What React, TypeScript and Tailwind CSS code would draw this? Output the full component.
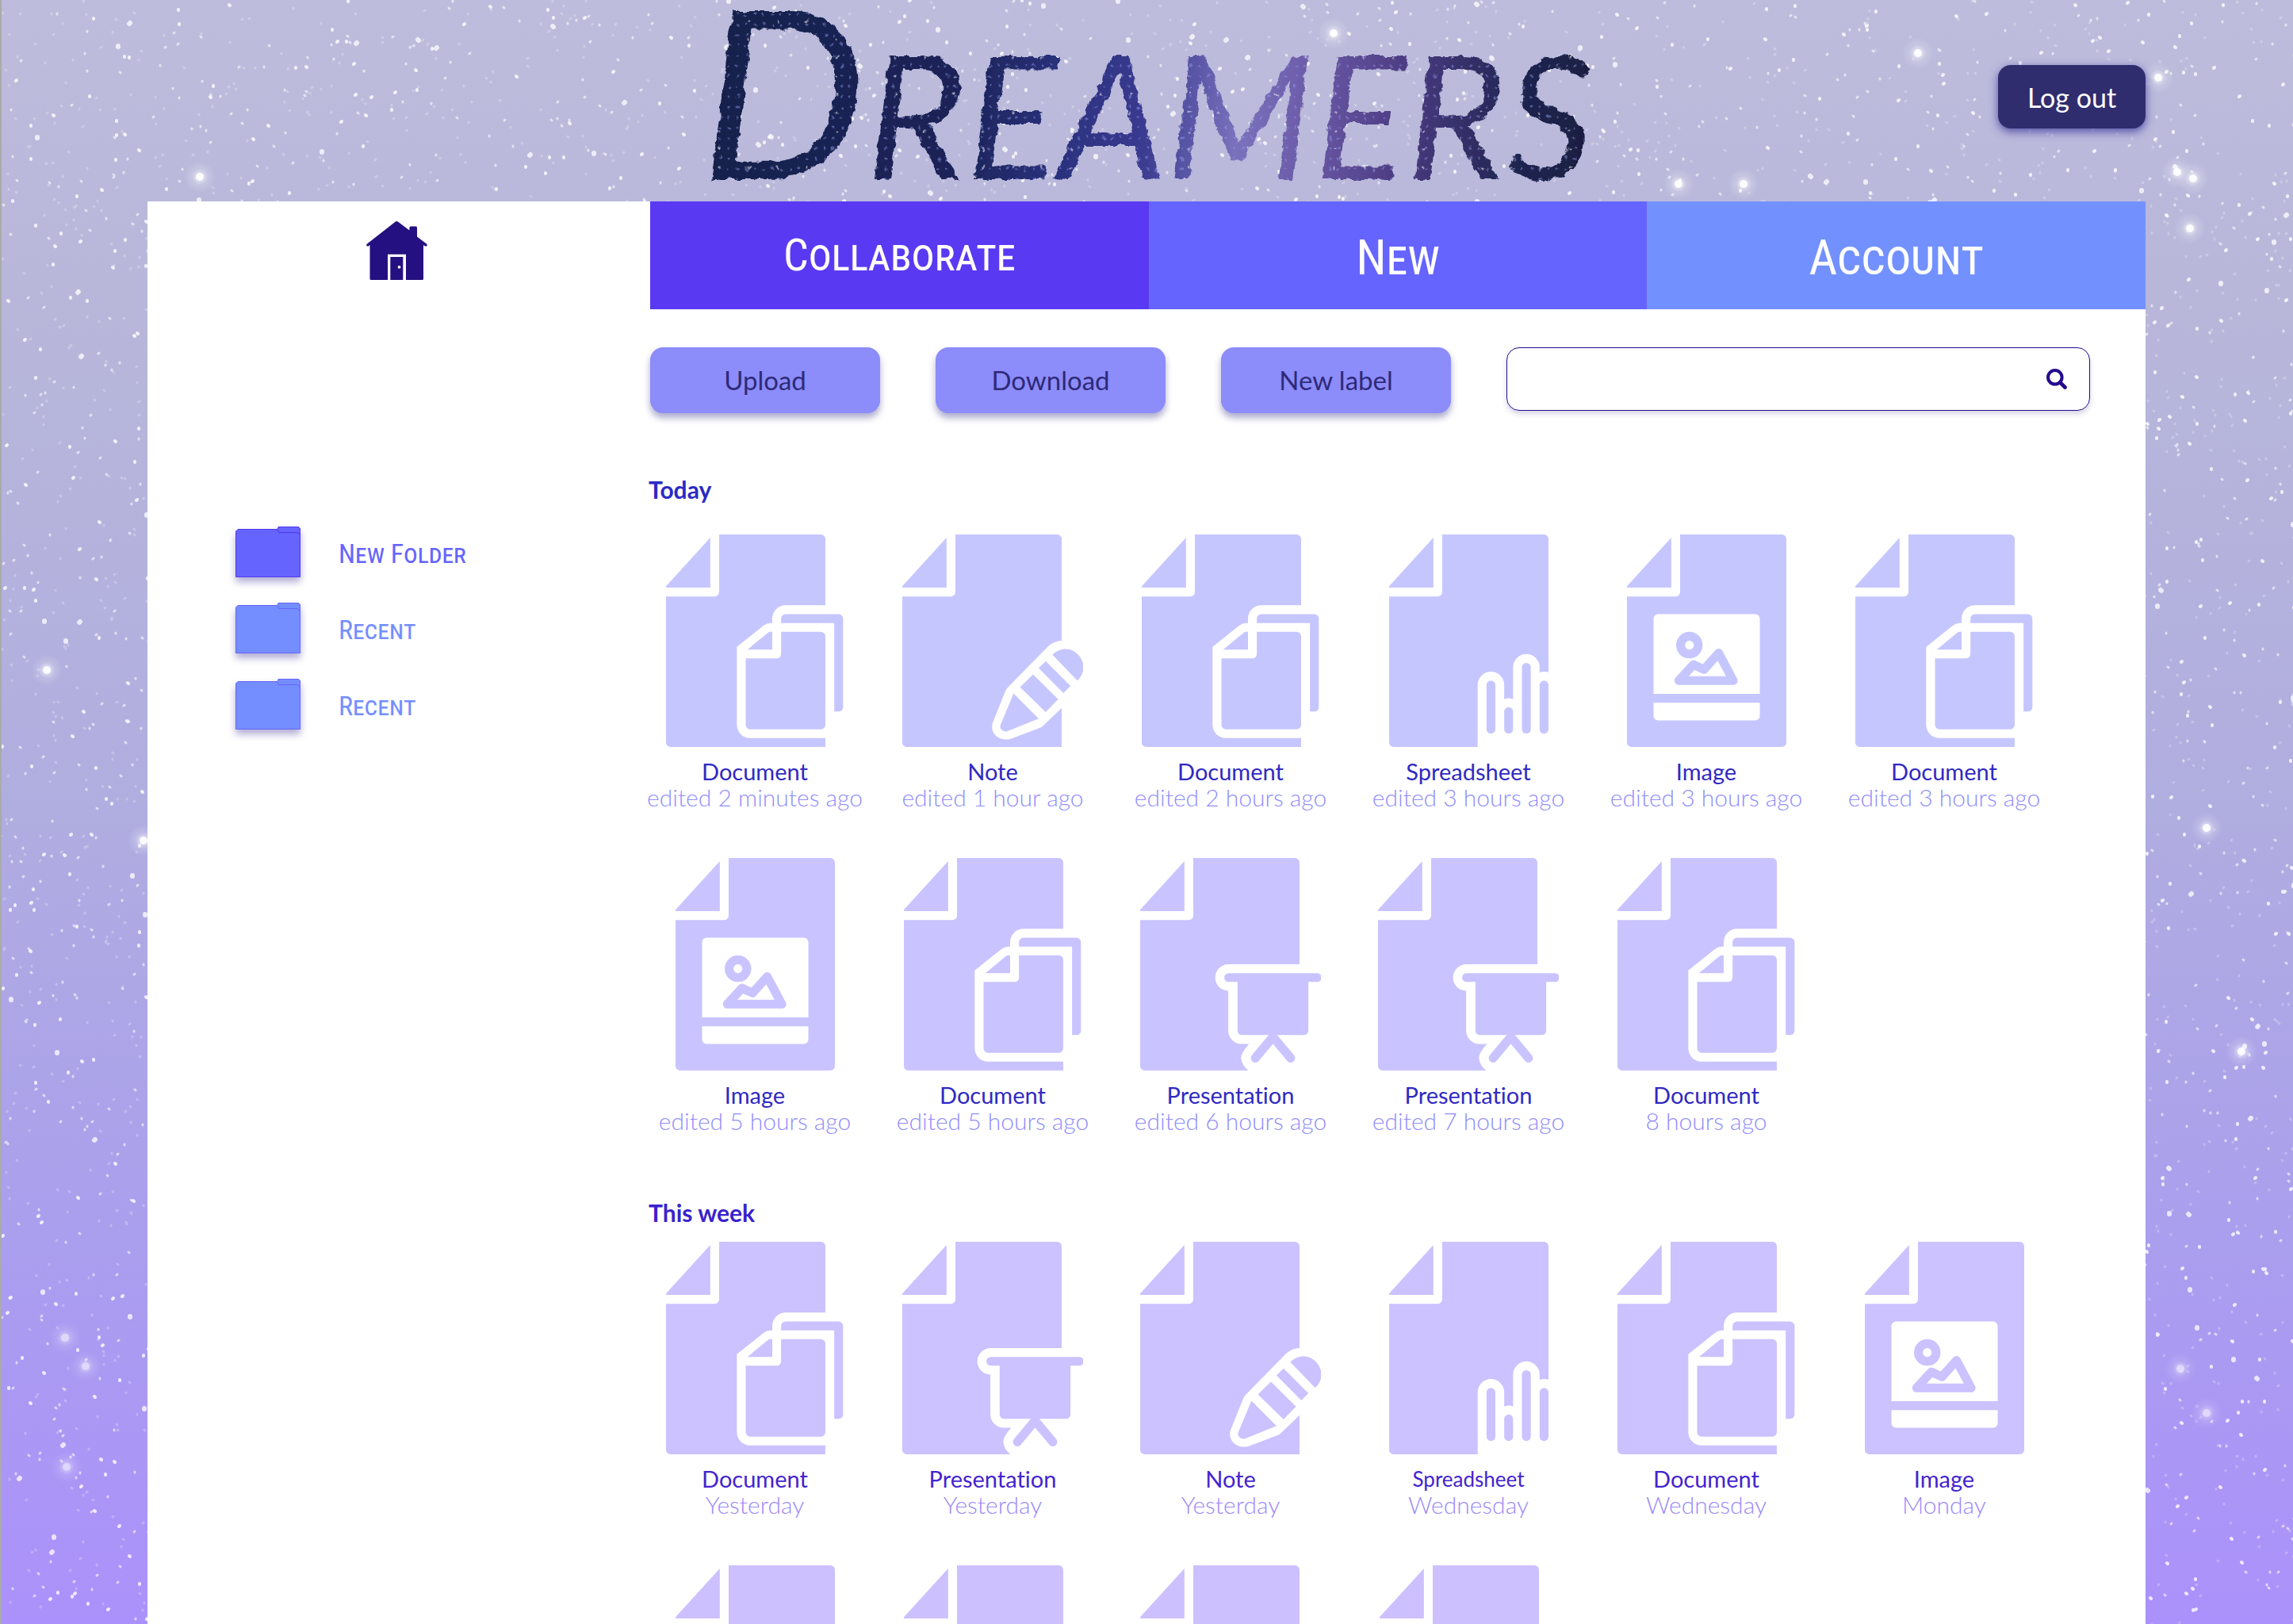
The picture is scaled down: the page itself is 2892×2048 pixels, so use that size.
import React from "react";

type Kind = "Document" | "Note" | "Spreadsheet" | "Image" | "Presentation";
type FileItem = { kind: Kind; when: string; small?: boolean };

const PAGE =
  "M6 0H17.5a.5.5 0 0 1 .5.5V24H.5a.5.5 0 0 1-.5-.5V7H5.5a.5.5 0 0 0 .5-.5Z";
const PAGE_ROUND =
  "M6 0H17.5a.5.5 0 0 1 .5.5V23.5a.5.5 0 0 1-.5.5H.5a.5.5 0 0 1-.5-.5V7H5.5a.5.5 0 0 0 .5-.5Z";

const today: FileItem[] = [
  { kind: "Document", when: "edited 2 minutes ago" },
  { kind: "Note", when: "edited 1 hour ago" },
  { kind: "Document", when: "edited 2 hours ago" },
  { kind: "Spreadsheet", when: "edited 3 hours ago" },
  { kind: "Image", when: "edited 3 hours ago" },
  { kind: "Document", when: "edited 3 hours ago" },
  { kind: "Image", when: "edited 5 hours ago" },
  { kind: "Document", when: "edited 5 hours ago" },
  { kind: "Presentation", when: "edited 6 hours ago" },
  { kind: "Presentation", when: "edited 7 hours ago" },
  { kind: "Document", when: "8 hours ago" },
];

const week: FileItem[] = [
  { kind: "Document", when: "Yesterday" },
  { kind: "Presentation", when: "Yesterday" },
  { kind: "Note", when: "Yesterday" },
  { kind: "Spreadsheet", when: "Wednesday", small: true },
  { kind: "Document", when: "Wednesday" },
  { kind: "Image", when: "Monday" },
  { kind: "Image", when: "Monday" },
  { kind: "Document", when: "Monday" },
  { kind: "Presentation", when: "Monday" },
  { kind: "Document", when: "Monday" },
];

/* Deterministic star field, grouped by brightness */
function makeStars(count: number, seed: number) {
  let s = seed;
  const rnd = () => {
    s = (s * 1664525 + 1013904223) % 4294967296;
    return s / 4294967296;
  };
  let d = "";
  for (let i = 0; i < count; i++) {
    const x = Math.round(rnd() * 2892);
    const y = Math.round(rnd() * 2048);
    const dx = Math.round(rnd() * 2 - 1);
    d += `M${x} ${y}l${dx} 1`;
  }
  return d;
}

const starLayers = [
  { d: makeStars(5200, 7), width: 3, opacity: 0.25 },
  { d: makeStars(3200, 91), width: 3, opacity: 0.6 },
  { d: makeStars(2000, 403), width: 4, opacity: 0.8 },
  { d: makeStars(360, 55), width: 6, opacity: 0.75 },
];

const glows = [
  [2417, 67], [2720, 98], [2744, 217], [2764, 225], [2760, 288],
  [1680, 42], [250, 223], [57, 845], [179, 1060], [80, 1687], [106, 1723],
  [82, 1850], [2781, 1044], [2825, 1326], [2748, 1726],
  [2781, 1782], [2115, 232], [2197, 232],
];

function Sky() {
  return (
    <svg className="absolute inset-0 h-full w-full" aria-hidden="true">
      <defs>
        <radialGradient id="glow">
          <stop offset="0" stopColor="#fff" stopOpacity="0.9" />
          <stop offset="0.25" stopColor="#fff" stopOpacity="0.5" />
          <stop offset="0.5" stopColor="#fff" stopOpacity="0.18" />
          <stop offset="1" stopColor="#fff" stopOpacity="0" />
        </radialGradient>
        <filter id="brush" x="-5%" y="-5%" width="110%" height="110%">
          <feTurbulence type="fractalNoise" baseFrequency="0.08" numOctaves="3" seed="4" result="n" />
          <feDisplacementMap in="SourceGraphic" in2="n" scale="9" xChannelSelector="R" yChannelSelector="G" />
        </filter>
      </defs>
      {starLayers.map((l, i) => (
        <path key={i} d={l.d} stroke="#fff" strokeWidth={l.width} strokeLinecap="round" opacity={l.opacity} fill="none" />
      ))}
      {glows.map(([x, y], i) => (
        <g key={i} opacity={y > 1600 ? 0.65 : 1}>
          <circle cx={x} cy={y} r="20" fill="url(#glow)" />
          <circle cx={x} cy={y} r="5" fill="#fff" opacity="0.85" />
        </g>
      ))}
    </svg>
  );
}

function FileIcon({ kind, tone }: { kind: Kind; tone: string }) {
  const wide = kind === "Document" ? 20 : kind === "Note" || kind === "Presentation" ? 20.5 : 18;
  return (
    <svg viewBox={`0 0 ${wide} 24`} className={`h-[268px] w-auto ${tone}`} fill="currentColor" aria-hidden="true">
      <path d="M0 6V5.85L5 .35V6Z" />
      <path d={kind === "Image" ? PAGE_ROUND : PAGE} />
      {kind === "Document" && (
        <>
          <path fill="#fff" d="M12 10V9.5A1.5 1.5 0 0 1 13.5 8H20V23H9.5A1.5 1.5 0 0 1 8 21.5V12.7L11 10.3Q11.4 10 11.8 10Z" />
          <path d="M13 10V9.5A.5.5 0 0 1 13.5 9H19.5A.5.5 0 0 1 20 9.5V19.5A.5.5 0 0 1 19.5 20H19V10Z" />
          <path d="M13 11H17.5A.5.5 0 0 1 18 11.5V21.5A.5.5 0 0 1 17.5 22H9.5A.5.5 0 0 1 9 21.5V14H12.5A.5.5 0 0 0 13 13.5Z" />
          <path d="M9.2 13L11.5 11.1Q11.6 11 11.8 11H12V13Z" />
        </>
      )}
      {kind === "Note" && (
        <>
          <path fill="#fff" d="M18.1 11.97Q17.2 12 16.5 12.6L11.96 17.25Q11.7 17.5 11.6 17.8L10.2 21.3C9.9 22.4 10.8 23.4 12.2 23.1L15.4 21.9Q15.7 21.8 15.9 21.6L18.1 19.5Z" />
          <path d="M16.96 13.6C17.7 12.8 19 12.7 19.8 13.5C20.7 14.4 20.7 15.6 19.77 16.5Z" />
          <path d="M16.2 14.3L19 17.1L18.2 17.9L15.4 15.1Z" />
          <path d="M14.77 15.8L17.6 18.6L16.2 20.05L13.3 17.25Z" />
          <path d="M12.57 17.96L15.4 20.8L11.9 22.2C11.4 22.4 10.9 21.9 11.1 21.5Z" />
        </>
      )}
      {kind === "Spreadsheet" && (
        <>
          <path fill="#fff" d="M10 24.1V17A1.5 1.5 0 0 1 13 17V18.6Q13.5 18.4 14 18.6V15A1.5 1.5 0 0 1 17 15V15.6Q17.5 15.4 18.1 15.6V24.1Z" />
          <rect x="11" y="16.5" width="1" height="6" rx=".5" />
          <rect x="13" y="19.5" width="1" height="3" rx=".5" />
          <rect x="15" y="14.5" width="1" height="8" rx=".5" />
          <rect x="17" y="16.5" width="1" height="6" rx=".5" />
        </>
      )}
      {kind === "Image" && (
        <>
          <path fill="#fff" d="M3 18V9.5A.5.5 0 0 1 3.5 9H14.5A.5.5 0 0 1 15 9.5V18ZM3 19H15V20.5A.5.5 0 0 1 14.5 21H3.5A.5.5 0 0 1 3 20.5Z" />
          <circle cx="7.05" cy="12.5" r="1" fill="none" stroke="currentColor" />
          <path d="M5.85 16.5L7.5 14.7L8.7 15.25L10.35 13.4L12 16.5Z" fill="none" stroke="currentColor" strokeLinejoin="round" />
        </>
      )}
      {kind === "Presentation" && (
        <>
          <path fill="#fff" d="M18.1 12H10A1.5 1.5 0 0 0 9.95 15V19.5A1.5 1.5 0 0 0 11.5 21H12.3Q11.4 22 11.4 22.6Q11.5 23.6 12.4 24.1H18.1Z" />
          <rect x="9.5" y="13" width="11" height="1" rx=".5" />
          <path d="M11 13.6H19V19.5A.5.5 0 0 1 18.5 20H11.5A.5.5 0 0 1 11 19.5Z" />
          <path d="M13 22.6L15 20.2L17 22.6" fill="none" stroke="currentColor" strokeLinecap="round" strokeLinejoin="round" />
        </>
      )}
    </svg>
  );
}

function FileCard({ item, tone, title, sub }: { item: FileItem; tone: string; title: string; sub: string }) {
  return (
    <a href="#file" className="flex flex-col items-center">
      <FileIcon kind={item.kind} tone={tone} />
      <span className={`mt-[15px] leading-8 ${item.small ? "text-[26px]" : "text-[29px]"} ${title}`}>{item.kind}</span>
      <span className={`text-[30px] leading-8 font-light ${sub}`}>{item.when}</span>
    </a>
  );
}

function FileSection({ title, items, heading, tones, gap, label, sub }: {
  title: string; items: FileItem[]; heading: string; tones: string[]; gap: string; label: string; sub: string;
}) {
  return (
    <section>
      <h2 className={`ml-4 text-[30px] leading-8 font-bold ${heading}`}>{title}</h2>
      <div className={`grid grid-cols-[repeat(auto-fill,300px)] gap-y-[61px] ${gap}`}>
        {items.map((item, i) => (
          <FileCard key={i} item={item} tone={tones[i < 6 ? 0 : 1]} title={label} sub={sub} />
        ))}
      </div>
    </section>
  );
}

function Folder({ name, dark }: { name: string; dark?: boolean }) {
  const fill = dark ? "#6664ff" : "#748eff";
  const line = dark ? "#5238ec" : "#6664ff";
  return (
    <a href="#folder" className="flex h-16 items-center gap-12">
      <svg viewBox="0 0 82 64" className="h-16 w-[82px] overflow-visible drop-shadow-[0_6px_5px_rgba(60,50,150,0.4)]" fill={fill} stroke={line} aria-hidden="true">
        <path d="M54 .5H79.5L81.5 2.5V12H54Z" />
        <path d="M.5 63.5V6L3 3.5H52.5Q53.5 7.5 56 7.5H78L81.5 10.5V63.5Z" />
        <path d="M52.5 3.5Q54 .5 56 .5H79.5L81.5 2.5V10L78 7.5H56Q53.5 7.5 52.5 3.5Z" />
      </svg>
      <span className={`pt-1 font-['Roboto_Condensed','Liberation_Sans_Narrow','Liberation_Sans',sans-serif] text-[34px] whitespace-nowrap [font-variant:small-caps] ${dark ? "text-[#6664ff]" : "text-[#748eff]"}`}>
        {name}
      </span>
    </a>
  );
}

function HomeIcon() {
  return (
    <svg viewBox="0 0 77 74" className="h-[74px] w-[77px]" fill="#241080" aria-hidden="true">
      <path d="M36.8.6Q38.3-.5 39.8.6L54.4 11.6V8Q54.4 6.5 56 6.5H62.5Q64 6.5 64 8V19.5L76.3 28.8Q77.3 30.2 76.2 31.2Q75.2 32 73.8 31.2L72 30V72.5Q72 74 70.5 74H50V41.7H27V74H6Q4.5 74 4.5 72.5V30L3 31.2Q1.6 32 .6 31.2Q-.4 30 .7 28.8Z" />
      <path d="M30.3 45H46.3V74H30.3Z" />
      <circle cx="41.5" cy="57.8" r="1.9" fill="#fff" />
    </svg>
  );
}

const tabs = [
  { name: "Collaborate", cls: "bg-[#5a39f3] text-[56px]" },
  { name: "New", cls: "bg-[#6664ff] pt-1 text-[62px]" },
  { name: "Account", cls: "bg-[#7291ff] pt-1 text-[62px]" },
];

export default function App() {
  return (
    <div className="relative isolate flex h-screen flex-col overflow-hidden border-l-2 border-[#aaaaaa] bg-[linear-gradient(180deg,#bdbcdc_0%,#b7b6da_22%,#b0ade0_50%,#aaa0ec_73%,#ab91fb_100%)] pr-[186px] pl-[184px] font-['Lato',sans-serif] [font-variant-ligatures:none]">
      <Sky />
      <header className="relative grid h-[254px] shrink-0 grid-cols-[1fr_auto_1fr] items-start">
        <span />
        <h1 className="h-[254px] bg-[radial-gradient(circle_at_3px_4px,rgba(255,255,255,0.5)_1px,transparent_2px),radial-gradient(circle_at_8px_5px,rgba(150,160,240,0.45)_1px,transparent_2px),linear-gradient(95deg,#171f4a_0%,#1b2458_30%,#2c3380_42%,#3a3a90_50%,#7a72bc_60%,#6a58a6_68%,#4a3a80_78%,#1f2550_90%,#171c3c_100%)] bg-[length:37px_23px,11px_13px,100%_100%] bg-clip-text px-4 text-[216px] leading-[224px] whitespace-nowrap text-transparent uppercase italic [filter:url(#brush)]">
          <span className="text-[296px] leading-[224px]">D</span>reamers
        </h1>
        <button className="mt-[82px] h-20 w-[186px] justify-self-end rounded-2xl bg-[#302d6f] text-[34px] text-white shadow-[0_4px_12px_rgba(50,45,150,0.75)]">
          Log out
        </button>
      </header>

      <div className="relative flex min-h-0 flex-1 flex-col overflow-y-auto bg-white [scrollbar-width:none]">
        <nav className="flex h-[136px] shrink-0">
          <a href="#home" aria-label="Home" className="flex w-[634px] justify-center pt-[25px] pr-1.5">
            <HomeIcon />
          </a>
          {tabs.map((t) => (
            <a
              key={t.name}
              href="#tab"
              className={`flex flex-1 items-center justify-center font-['Roboto_Condensed','Liberation_Sans_Narrow','Liberation_Sans',sans-serif] text-white [font-variant:small-caps] ${t.cls}`}
            >
              {t.name}
            </a>
          ))}
        </nav>

        <div className="flex">
          <aside className="flex w-[616px] shrink-0 flex-col gap-8 pt-[274px] pl-[111px]">
            <Folder name="New Folder" dark />
            <Folder name="Recent" />
            <Folder name="Recent" />
          </aside>

          <main className="min-w-0 flex-1 pt-12">
            <div className="mr-[70px] mb-20 ml-[18px] flex items-start gap-[70px]">
              {["Upload", "Download", "New label"].map((b) => (
                <button
                  key={b}
                  className="h-[83px] w-[290px] shrink-0 rounded-2xl bg-[#8c8cfb] text-[33px] text-[#2e2a78] shadow-[0_6px_8px_rgba(50,45,130,0.4)]"
                >
                  {b}
                </button>
              ))}
              <form role="search" className="flex h-20 min-w-0 flex-1 items-center rounded-2xl border border-[#240a8c] pr-7 shadow-[0_4px_6px_rgba(50,45,130,0.2)]">
                <input type="search" aria-label="Search files" className="h-full min-w-0 flex-1 rounded-2xl bg-transparent px-6 text-[30px] text-[#240a8c] outline-none" />
                <button type="button" aria-label="Search">
                  <svg viewBox="0 0 26 26" className="size-[26px]" fill="none" stroke="#240a8c" strokeLinecap="round" aria-hidden="true">
                    <circle cx="10.8" cy="10.8" r="8.8" strokeWidth="4" />
                    <path d="M18 18L23.5 23.5" strokeWidth="4.6" />
                  </svg>
                </button>
              </form>
            </div>

            <div className="flex flex-col gap-[84px]">
              <FileSection
                title="Today"
                items={today}
                heading="text-[#2c2ac4]"
                tones={["text-[#c6c6ff]", "text-[#c9c4ff]"]}
                gap="mt-[41px]"
                label="text-[#3029c2]"
                sub="text-[#918efa]"
              />
              <FileSection
                title="This week"
                items={week}
                heading="text-[#3a22cc]"
                tones={["text-[#cbc2ff]", "text-[#cdc0ff]"]}
                gap="mt-[21px]"
                label="text-[#4424d0]"
                sub="text-[#9c88f8]"
              />
            </div>
          </main>
        </div>
      </div>
    </div>
  );
}
